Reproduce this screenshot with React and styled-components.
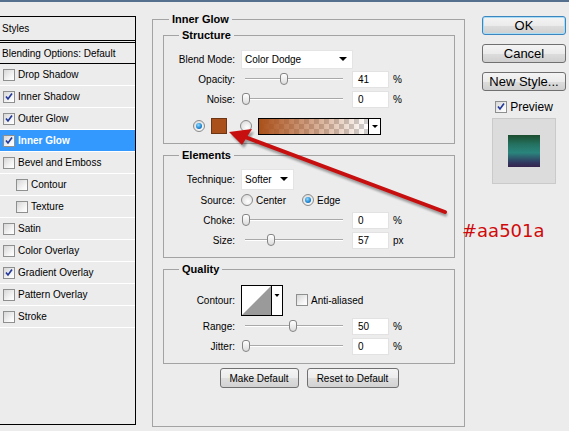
import React from "react";
import styled, { createGlobalStyle } from "styled-components";

const GlobalStyle = createGlobalStyle`
  html, body {
    margin: 0;
    padding: 0;
    background: #ececec;
    overflow: hidden;
  }
  body {
    font-family: "Liberation Sans", Arial, sans-serif;
    font-size: 10px;
    color: #000;
  }
`;

const styleItems = [
  { label: "Drop Shadow" },
  { label: "Inner Shadow", checked: true },
  { label: "Outer Glow", checked: true },
  { label: "Inner Glow", checked: true, active: true },
  { label: "Bevel and Emboss" },
  { label: "Contour", indent: true },
  { label: "Texture", indent: true },
  { label: "Satin" },
  { label: "Color Overlay" },
  { label: "Gradient Overlay", checked: true },
  { label: "Pattern Overlay" },
  { label: "Stroke" },
];

const Checkbox = ({ checked }) => (
  <CheckBox>
    {checked && (
      <svg width="11" height="11" viewBox="0 0 11 11">
        <path d="M2.2 5.4 L4.4 8.2 L8.8 2.2" fill="none" stroke="#22389a" strokeWidth="1.8" />
      </svg>
    )}
  </CheckBox>
);

const Slider = ({ pos }) => (
  <SliderWrap>
    <Track />
    <Thumb $pos={pos} />
  </SliderWrap>
);

const SliderRow = ({ label, pos, value, unit }) => (
  <Row>
    <Label>{label}</Label>
    <Slider pos={pos} />
    <NumberBox>{value}</NumberBox>
    <Unit>{unit}</Unit>
  </Row>
);

const ContourPicker = () => (
  <ContourBox width="42" height="31" viewBox="0 0 42 31">
    <rect x="0.5" y="0.5" width="41" height="30" fill="#fff" stroke="#000" />
    <polygon points="1,30 30,1 30,30" fill="#9a9a9a" />
    <line x1="30.5" y1="0.5" x2="30.5" y2="30.5" stroke="#000" />
    <polygon points="33.5,9 38.5,9 36,12" fill="#000" />
  </ContourBox>
);

const App = () => {
  return (
    <>
      <GlobalStyle />
      <Window>
        <TopEdge />
        <Content>
          <StylesPanel>
            <PanelHeader>Styles</PanelHeader>
            <BlendingRow>Blending Options: Default</BlendingRow>
            {styleItems.map((item) => (
              <StyleRow key={item.label} $indent={item.indent} $active={item.active}>
                <Checkbox checked={item.checked} />
                <span>{item.label}</span>
              </StyleRow>
            ))}
          </StylesPanel>

          <MainGroup>
            <Legend $inset={6}>Inner Glow</Legend>

            <Group $pad="7px 0 7px">
              <Legend $inset={15}>Structure</Legend>
              <Row>
                <Label>Blend Mode:</Label>
                <Select $w={112}>
                  Color Dodge
                  <Caret />
                </Select>
              </Row>
              <SliderRow label="Opacity:" pos={39} value="41" unit="%" />
              <SliderRow label="Noise:" pos={1} value="0" unit="%" />
              <ColorRow>
                <Radio $checked />
                <Swatch />
                <Radio />
                <GradientPicker>
                  <GradientFill />
                  <GradientDrop>
                    <SmallCaret />
                  </GradientDrop>
                </GradientPicker>
              </ColorRow>
            </Group>

            <Group $pad="6px 0 7px" $gap>
              <Legend $inset={15}>Elements</Legend>
              <Row $h={22}>
                <Label>Technique:</Label>
                <Select $w={53} $h={21}>
                  Softer
                  <Caret />
                </Select>
              </Row>
              <Row>
                <Label>Source:</Label>
                <RadioOption>
                  <Radio />
                  Center
                </RadioOption>
                <RadioOption>
                  <Radio $checked />
                  Edge
                </RadioOption>
              </Row>
              <SliderRow label="Choke:" pos={1} value="0" unit="%" />
              <SliderRow label="Size:" pos={26} value="57" unit="px" />
            </Group>

            <Group $pad="8px 0 7px" $gap>
              <Legend $inset={15}>Quality</Legend>
              <Row $h={32}>
                <Label>Contour:</Label>
                <ContourPicker />
                <AntiAlias>
                  <Checkbox />
                  Anti-aliased
                </AntiAlias>
              </Row>
              <SliderRow label="Range:" pos={48} value="50" unit="%" />
              <SliderRow label="Jitter:" pos={1} value="0" unit="%" />
            </Group>

            <ButtonRow>
              <PushButton $w={79}>Make Default</PushButton>
              <PushButton $w={92}>Reset to Default</PushButton>
            </ButtonRow>
          </MainGroup>

          <SideColumn>
            <DialogButton $default>OK</DialogButton>
            <DialogButton>Cancel</DialogButton>
            <DialogButton>New Style...</DialogButton>
            <PreviewToggle>
              <Checkbox checked />
              Preview
            </PreviewToggle>
            <PreviewBox>
              <PreviewSample />
            </PreviewBox>
          </SideColumn>
        </Content>

        <ArrowOverlay width="569" height="431" viewBox="0 0 569 431">
          <defs>
            <filter id="arrowBlur" x="-10%" y="-10%" width="120%" height="120%">
              <feGaussianBlur stdDeviation="1.2" />
            </filter>
          </defs>
          <g transform="translate(2 3)" opacity="0.35" filter="url(#arrowBlur)">
            <line x1="445" y1="212" x2="245" y2="137" stroke="#000" strokeWidth="4" />
            <polygon points="229,132 252,129 242,145" fill="#000" />
          </g>
          <line x1="445" y1="212" x2="245" y2="137" stroke="#c80f0f" strokeWidth="4" strokeLinecap="round" />
          <polygon points="229,132 252,129 242,145" fill="#c80f0f" />
        </ArrowOverlay>
        <HexNote>#aa501a</HexNote>
      </Window>
    </>
  );
};

export default App;

const Window = styled.div`
  position: relative;
  width: 569px;
  height: 431px;
  background: #ececec;
  display: flex;
  flex-direction: column;
  overflow: hidden;
`;

const TopEdge = styled.div`
  height: 2px;
  flex-shrink: 0;
  background: #55708f;
`;

const Content = styled.div`
  display: flex;
  align-items: flex-start;
`;

/* left styles list */
const StylesPanel = styled.div`
  width: 136px;
  height: 409px;
  margin-top: 14px;
  flex-shrink: 0;
  box-sizing: border-box;
  border: 1px solid #000;
  border-left: none;
`;

const PanelHeader = styled.div`
  height: 23px;
  display: flex;
  align-items: center;
  padding-left: 2px;
  border-bottom: 3px double #000;
`;

const BlendingRow = styled.div`
  height: 20px;
  display: flex;
  align-items: center;
  padding-left: 2px;
  border-bottom: 1px solid #000;
`;

const StyleRow = styled.div`
  height: 21px;
  display: flex;
  align-items: center;
  gap: 3px;
  padding-left: ${(p) => (p.$indent ? 16 : 3)}px;
  border-bottom: 1px solid #fff;
  background: ${(p) => (p.$active ? "#3399ff" : "transparent")};
  color: ${(p) => (p.$active ? "#fff" : "#000")};
  font-weight: ${(p) => (p.$active ? "bold" : "normal")};
`;

const CheckBox = styled.span`
  width: 12px;
  height: 12px;
  box-sizing: border-box;
  flex-shrink: 0;
  display: inline-flex;
  align-items: center;
  justify-content: center;
  border: 1px solid #8e8f8f;
  background: linear-gradient(135deg, #d6d6d6, #f7f7f7 70%, #fff);
`;

/* main group boxes */
const MainGroup = styled.fieldset`
  width: 313px;
  height: 415px;
  margin: 10px 0 0 16px;
  padding: 2px 9px 0 10px;
  box-sizing: border-box;
  min-width: 0;
  flex-shrink: 0;
  border: 1px solid #a3a3a3;
`;

const Group = styled.fieldset`
  margin: ${(p) => (p.$gap ? "4px" : "0")} 0 0;
  padding: ${(p) => p.$pad};
  min-width: 0;
  border: 1px solid #a3a3a3;
`;

const Legend = styled.legend`
  padding: 0 3px;
  margin-left: ${(p) => p.$inset}px;
  font-size: 11px;
  line-height: 14px;
  font-weight: bold;
`;

const Row = styled.div`
  height: ${(p) => p.$h || 20}px;
  display: flex;
  align-items: center;
`;

const Label = styled.span`
  width: 71px;
  flex-shrink: 0;
  margin-right: 6px;
  text-align: right;
`;

const Select = styled.div`
  width: ${(p) => p.$w}px;
  height: ${(p) => p.$h || 19}px;
  box-sizing: border-box;
  display: flex;
  align-items: center;
  justify-content: space-between;
  padding: 0 5px 0 3px;
  background: #fff;
  border: 1px solid #e4e4e4;
`;

const Caret = styled.span`
  width: 0;
  height: 0;
  border-left: 4px solid transparent;
  border-right: 4px solid transparent;
  border-top: 4px solid #000;
`;

const SmallCaret = styled(Caret)`
  border-left-width: 3px;
  border-right-width: 3px;
  border-top-width: 3px;
`;

const SliderWrap = styled.div`
  position: relative;
  width: 104px;
  height: 16px;
  flex-shrink: 0;
`;

const Track = styled.div`
  position: absolute;
  left: 4px;
  right: 2px;
  top: 7px;
  border-top: 1px solid #a9a9a9;
  border-bottom: 1px solid #fff;
`;

const Thumb = styled.div`
  position: absolute;
  top: 2px;
  left: ${(p) => p.$pos}px;
  width: 8px;
  height: 12px;
  box-sizing: border-box;
  border: 1px solid #858585;
  border-radius: 3px 3px 4px 4px;
  background: linear-gradient(#ffffff, #dcdcdc);
`;

const NumberBox = styled.div`
  width: 37px;
  height: 17px;
  box-sizing: border-box;
  margin-left: 7px;
  padding-left: 5px;
  line-height: 15px;
  background: #fff;
  border: 1px solid #e2e2e2;
`;

const Unit = styled.span`
  margin-left: 4px;
`;

const ColorRow = styled.div`
  height: 20px;
  margin-top: 7px;
  padding-left: 29px;
  display: flex;
  align-items: center;
`;

const Radio = styled.span`
  position: relative;
  width: 12px;
  height: 12px;
  flex-shrink: 0;
  box-sizing: border-box;
  border-radius: 50%;
  border: 1px solid #8a8a8a;
  background: radial-gradient(circle at 60% 65%, #ffffff, #d4d4d4);
  &::after {
    content: "";
    display: ${(p) => (p.$checked ? "block" : "none")};
    position: absolute;
    left: 2px;
    top: 2px;
    width: 6px;
    height: 6px;
    border-radius: 50%;
    background: radial-gradient(circle at 40% 35%, #8fdcff, #1c82d0 60%, #0a4f8f);
  }
`;

const Swatch = styled.span`
  width: 16px;
  height: 16px;
  margin: 0 13px 0 6px;
  box-sizing: border-box;
  background: #aa501a;
  border: 1px solid #6e3512;
`;

const GradientPicker = styled.div`
  width: 123px;
  height: 17px;
  margin-left: 6px;
  box-sizing: border-box;
  display: flex;
  border: 1px solid #000;
`;

const GradientFill = styled.div`
  flex: 1;
  background-image: linear-gradient(to right, #aa501a, rgba(170, 80, 26, 0)),
    repeating-conic-gradient(#cfcfcf 0% 25%, #ffffff 0% 50%);
  background-size: 100% 100%, 10px 10px;
`;

const GradientDrop = styled.div`
  width: 11px;
  display: flex;
  align-items: center;
  justify-content: center;
  background: #fff;
  border-left: 1px solid #000;
`;

const RadioOption = styled.label`
  display: flex;
  align-items: center;
  gap: 3px;
  margin-right: 16px;
`;

const ContourBox = styled.svg`
  display: block;
  flex-shrink: 0;
`;

const AntiAlias = styled.label`
  display: flex;
  align-items: center;
  gap: 3px;
  margin-left: 13px;
`;

const ButtonRow = styled.div`
  margin-top: 4px;
  display: flex;
  justify-content: center;
  gap: 8px;
`;

const PushButton = styled.div`
  width: ${(p) => p.$w}px;
  height: 20px;
  box-sizing: border-box;
  display: flex;
  align-items: center;
  justify-content: center;
  border: 1px solid #707070;
  border-radius: 3px;
  background: linear-gradient(#f4f4f4 0%, #ececec 50%, #dedede 51%, #d2d2d2 100%);
`;

/* right column */
const SideColumn = styled.div`
  width: 84px;
  margin: 14px 0 0 17px;
  flex-shrink: 0;
  display: flex;
  flex-direction: column;
  gap: 9px;
`;

const DialogButton = styled.div`
  height: 19px;
  box-sizing: border-box;
  display: flex;
  align-items: center;
  justify-content: center;
  font-size: 13px;
  border: 1px solid ${(p) => (p.$default ? "#3c86c0" : "#707070")};
  border-radius: 3px;
  box-shadow: ${(p) => (p.$default ? "inset 0 0 0 1px #a9dcf5" : "none")};
  background: linear-gradient(#f4f4f4 0%, #ebebeb 50%, #dddddd 51%, #cfcfcf 100%);
`;

const PreviewToggle = styled.label`
  display: flex;
  align-items: center;
  justify-content: center;
  gap: 3px;
  height: 13px;
  font-size: 12px;
`;

const PreviewBox = styled.div`
  width: 64px;
  height: 66px;
  margin: -4px auto 0;
  box-sizing: border-box;
  display: flex;
  align-items: center;
  justify-content: center;
  background: #dcdcdc;
  border: 1px solid #cacaca;
`;

const PreviewSample = styled.div`
  width: 32px;
  height: 32px;
  background: linear-gradient(#1c4d2e 0%, #247262 30%, #2a857c 55%, #313a62 85%, #35234d 100%);
`;

/* annotation overlays */
const ArrowOverlay = styled.svg`
  position: absolute;
  left: 0;
  top: 0;
  pointer-events: none;
`;

const HexNote = styled.div`
  position: absolute;
  left: 462px;
  top: 222px;
  font-family: "DejaVu Sans", Verdana, sans-serif;
  font-size: 18px;
  line-height: 1;
  color: #d00a0a;
`;
